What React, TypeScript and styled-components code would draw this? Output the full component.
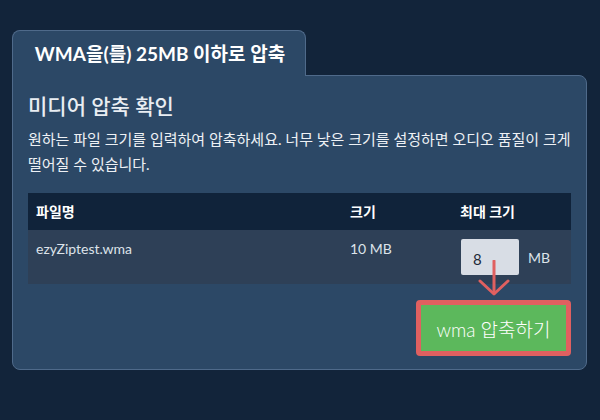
import React from 'react';
import styled, { createGlobalStyle } from 'styled-components';

const GlobalStyle = createGlobalStyle`
  html, body {
    margin: 0;
    padding: 0;
    background: #12243a;
    font-family: 'Lato', 'Noto Sans CJK KR', sans-serif;
  }
`;

const Page = styled.div`
  width: 600px;
  height: 420px;
  box-sizing: border-box;
  padding: 30px 13px 0 12px;
`;

const Tab = styled.div`
  width: 294px;
  height: 46px;
  box-sizing: border-box;
  background: #2c4866;
  border: 1px solid #4f6a8a;
  border-bottom: none;
  border-radius: 8px 8px 0 0;
  display: flex;
  align-items: center;
  justify-content: center;
  color: #ffffff;
  font-size: 19px;
  font-weight: 700;
  position: relative;
  z-index: 1;
  margin-bottom: -1px;
  padding: 0 0 2px 2px;
`;

const Panel = styled.div`
  position: relative;
  box-sizing: border-box;
  height: 295px;
  background: #2c4866;
  border: 1px solid #4f6a8a;
  border-radius: 0 8px 8px 8px;
  padding: 15px 15px 0 15px;
`;

const Heading = styled.h2`
  margin: 0;
  font-size: 21px;
  font-weight: 500;
  color: #e9edf2;
  line-height: 30px;
`;

const Description = styled.p`
  margin: 6px 0 0;
  font-size: 15px;
  line-height: 25px;
  color: #eef1f5;
`;

const Table = styled.table`
  width: 543px;
  margin-top: 16px;
  border-collapse: collapse;
  table-layout: fixed;
  font-size: 14px;
`;

const HeadCell = styled.th<{ $w?: number }>`
  box-sizing: border-box;
  background: #10233a;
  color: #ffffff;
  font-weight: 700;
  text-align: left;
  padding: 8px 8px;
  line-height: 21px;
  width: ${p => (p.$w ? `${p.$w}px` : 'auto')};
`;

const Cell = styled.td`
  background: #2e4057;
  color: #dde3ea;
  vertical-align: top;
  padding: 9px 8px;
  line-height: 20px;
`;

const SizeBox = styled.div`
  display: flex;
  align-items: center;
  gap: 9px;
  padding-left: 1px;
`;

const SizeInput = styled.div`
  flex: 0 0 58px;
  height: 36px;
  box-sizing: border-box;
  background: #d8dde5;
  border-radius: 2px;
  color: #1d2a3a;
  font-size: 15px;
  display: flex;
  align-items: center;
  padding: 4px 0 0 12px;
`;

const Unit = styled.span`
  color: #dde3ea;
  font-size: 14px;
  padding-top: 1px;
`;

const Actions = styled.div`
  display: flex;
  justify-content: flex-end;
  margin-top: 16px;
`;

const CompressButton = styled.button`
  width: 155px;
  height: 56px;
  box-sizing: border-box;
  background: #5cb85c;
  border: 5px solid #e06060;
  border-radius: 4px;
  color: #ffffff;
  font-family: 'Lato', 'Noto Sans CJK KR', sans-serif;
  font-size: 19px;
  font-weight: 300;
  cursor: pointer;
`;

const Arrow = styled.svg`
  position: absolute;
  left: 465px;
  top: 184px;
`;

export default function App() {
  return (
    <>
      <GlobalStyle />
      <Page>
        <Tab>WMA을(를) 25MB 이하로 압축</Tab>
        <Panel>
          <Heading>미디어 압축 확인</Heading>
          <Description>
            원하는 파일 크기를 입력하여 압축하세요. 너무 낮은 크기를 설정하면 오디오 품질이 크게
            떨어질 수 있습니다.
          </Description>
          <Table>
            <thead>
              <tr>
                <HeadCell $w={314}>파일명</HeadCell>
                <HeadCell $w={110}>크기</HeadCell>
                <HeadCell>최대 크기</HeadCell>
              </tr>
            </thead>
            <tbody>
              <tr>
                <Cell>ezyZiptest.wma</Cell>
                <Cell>10 MB</Cell>
                <Cell>
                  <SizeBox>
                    <SizeInput>8</SizeInput>
                    <Unit>MB</Unit>
                  </SizeBox>
                </Cell>
              </tr>
            </tbody>
          </Table>
          <Actions>
            <CompressButton>wma 압축하기</CompressButton>
          </Actions>
          <Arrow width="32" height="36" viewBox="0 0 32 36">
            <line x1="16" y1="1" x2="16" y2="33" stroke="#e06060" strokeWidth="3" strokeLinecap="round" />
            <polyline points="2,21 16,34 30,21" fill="none" stroke="#e06060" strokeWidth="3" strokeLinecap="round" strokeLinejoin="round" />
          </Arrow>
        </Panel>
      </Page>
    </>
  );
}
